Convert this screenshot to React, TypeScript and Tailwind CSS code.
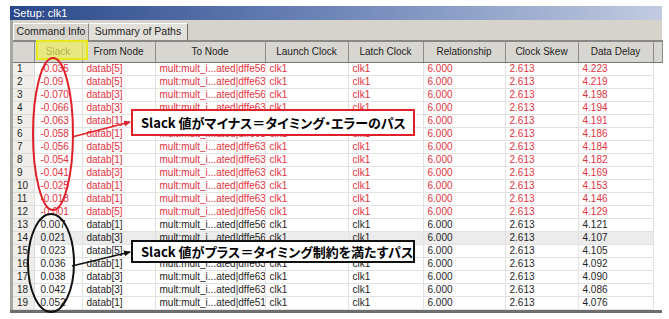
import React from "react";

type Row = { n: number; slack: string; from: string; to: string; delay: string };

const rows: Row[] = [
  { n: 1, slack: "-0.035", from: "datab[5]", to: "dffe56", delay: "4.223" },
  { n: 2, slack: "-0.09", from: "datab[5]", to: "dffe63", delay: "4.219" },
  { n: 3, slack: "-0.070", from: "datab[3]", to: "dffe56", delay: "4.198" },
  { n: 4, slack: "-0.066", from: "datab[3]", to: "dffe63", delay: "4.194" },
  { n: 5, slack: "-0.063", from: "datab[1]", to: "dffe63", delay: "4.191" },
  { n: 6, slack: "-0.058", from: "datab[1]", to: "dffe63", delay: "4.186" },
  { n: 7, slack: "-0.056", from: "datab[5]", to: "dffe63", delay: "4.184" },
  { n: 8, slack: "-0.054", from: "datab[1]", to: "dffe63", delay: "4.182" },
  { n: 9, slack: "-0.041", from: "datab[3]", to: "dffe63", delay: "4.169" },
  { n: 10, slack: "-0.025", from: "datab[1]", to: "dffe63", delay: "4.153" },
  { n: 11, slack: "-0.018", from: "datab[1]", to: "dffe63", delay: "4.146" },
  { n: 12, slack: "-0.001", from: "datab[5]", to: "dffe56", delay: "4.129" },
  { n: 13, slack: "0.007", from: "datab[1]", to: "dffe56", delay: "4.121" },
  { n: 14, slack: "0.021", from: "datab[3]", to: "dffe56", delay: "4.107" },
  { n: 15, slack: "0.023", from: "datab[5]", to: "dffe56", delay: "4.105" },
  { n: 16, slack: "0.036", from: "datab[1]", to: "dffe63", delay: "4.092" },
  { n: 17, slack: "0.038", from: "datab[3]", to: "dffe63", delay: "4.090" },
  { n: 18, slack: "0.042", from: "datab[3]", to: "dffe63", delay: "4.086" },
  { n: 19, slack: "0.052", from: "datab[1]", to: "dffe51", delay: "4.076" },
];

const headers = [
  { label: "", w: "w-[21px]" },
  { label: "Slack", w: "w-[48px]" },
  { label: "From Node", w: "w-[73px]" },
  { label: "To Node", w: "w-[110px]" },
  { label: "Launch Clock", w: "w-[83px]" },
  { label: "Latch Clock", w: "w-[75px]" },
  { label: "Relationship", w: "w-[82px]" },
  { label: "Clock Skew", w: "w-[73px]" },
  { label: "Data Delay", w: "w-[75px]" },
  { label: "", w: "w-[9px]" },
];

function Annotations() {
  return (
    <svg className="absolute left-0 top-0 pointer-events-none" width="669" height="319">
      <defs>
        <marker id="hr" markerWidth="8" markerHeight="8" refX="6" refY="3" orient="auto" markerUnits="userSpaceOnUse">
          <path d="M0,0 L7,3 L0,6 Z" fill="#e0202a" />
        </marker>
        <marker id="hb" markerWidth="8" markerHeight="8" refX="6" refY="3" orient="auto" markerUnits="userSpaceOnUse">
          <path d="M0,0 L7,3 L0,6 Z" fill="#111" />
        </marker>
      </defs>
      <ellipse cx="53" cy="134" rx="20" ry="76" fill="none" stroke="#e0202a" strokeWidth="2" />
      <ellipse cx="51" cy="263" rx="23" ry="49" fill="none" stroke="#111" strokeWidth="2" />
      <line x1="72" y1="137" x2="130" y2="122" stroke="#e0202a" strokeWidth="1.5" markerEnd="url(#hr)" />
      <line x1="72" y1="266" x2="130" y2="252" stroke="#111" strokeWidth="1.5" markerEnd="url(#hb)" />
    </svg>
  );
}

export default function App() {
  return (
    <div className="relative w-[669px] h-[319px] bg-white overflow-hidden font-['Liberation_Sans',Arial,sans-serif] text-[#222]">
      <div className="ml-[10px] mt-[6px] w-[652px]">
        <div className="h-[14px] bg-gradient-to-r from-[#2a4889] via-[#6f86b8] to-[#c2cbe0] text-white text-[11px] leading-[14px] pl-[3px]">
          Setup: clk1
        </div>
        <div className="bg-[#d6d3cc] border-l-[3px] border-[#a8a6a0]">
          <div className="h-[20px] flex items-end">
            <div className="h-[17px] w-[76px] flex items-center justify-center text-[10.5px] border-t border-l border-white border-r border-r-[#8c8a85] bg-[#d9d6cf]">
              Command Info
            </div>
            <div className="h-[17px] w-[99px] flex items-center justify-center text-[10.5px] border-t border-white border-r border-r-[#6f6d69] bg-[#e2e0da]">
              Summary of Paths
            </div>
          </div>
          <table className="table-fixed border-collapse w-[649px] bg-white">
            <thead>
              <tr className="h-[21px]">
                {headers.map((h, i) => (
                  <th
                    key={i}
                    className={`${h.w} p-0 font-normal text-[10px] text-center bg-[#d8d6d0] border-t-2 border-t-[#8a8884] border-b border-b-[#7a7874] border-r border-r-[#8e8c88]`}
                  >
                    {h.label}
                  </th>
                ))}
              </tr>
            </thead>
            <tbody>
              {rows.map((r) => {
                const neg = r.slack.startsWith("-");
                const c = neg ? "text-[#e2323e]" : "text-[#1e1e1e]";
                const bg = r.n === 14 ? "bg-[#ececec]" : "bg-white";
                const cell = `p-0 pl-[4px] h-[13px] text-[10px] leading-[12px] whitespace-nowrap overflow-hidden border-b border-r border-[#e2e2e2] ${c}`;
                return (
                  <tr key={r.n} className={bg}>
                    <td className="p-0 pl-[4px] h-[13px] text-[10px] leading-[12px] text-[#1e1e1e] bg-[#efeeea] border-b border-r border-[#dcdcdc]">{r.n}</td>
                    <td className={`${cell} pl-[6px]`}>{r.slack}</td>
                    <td className={cell}>{r.from}</td>
                    <td className={`${cell} pl-[1px]`}>{"mult:mult_i...ated|" + r.to}</td>
                    <td className={`${cell} pl-[3px]`}>clk1</td>
                    <td className={cell}>clk1</td>
                    <td className={cell}>6.000</td>
                    <td className={cell}>2.613</td>
                    <td className={cell}>{r.delay}</td>
                    <td className="p-0 bg-white"></td>
                  </tr>
                );
              })}
            </tbody>
          </table>
        </div>
        <div className="h-[3px] bg-[#6e6e6e]"></div>
      </div>

      <div className="absolute left-[36px] top-[40px] w-[52px] h-[20px] border-2 border-[#e6e81c] bg-[#f0f060]/70"></div>

      <Annotations />

      <div className="absolute left-[131px] top-[109px] w-[284px] h-[27px] border-2 border-[#e0202a] bg-white flex items-center pl-[8px] font-['Noto_Sans_CJK_JP',sans-serif] font-bold text-[13px] text-black [font-feature-settings:'palt'] whitespace-nowrap">
        Slack 値がマイナス＝タイミング・エラーのパス
      </div>
      <div className="absolute left-[131px] top-[240px] w-[284px] h-[23px] border-2 border-[#111] bg-white flex items-center pl-[8px] font-['Noto_Sans_CJK_JP',sans-serif] font-bold text-[13px] text-black [font-feature-settings:'palt'] whitespace-nowrap">
        Slack 値がプラス＝タイミング制約を満たすパス
      </div>
    </div>
  );
}
